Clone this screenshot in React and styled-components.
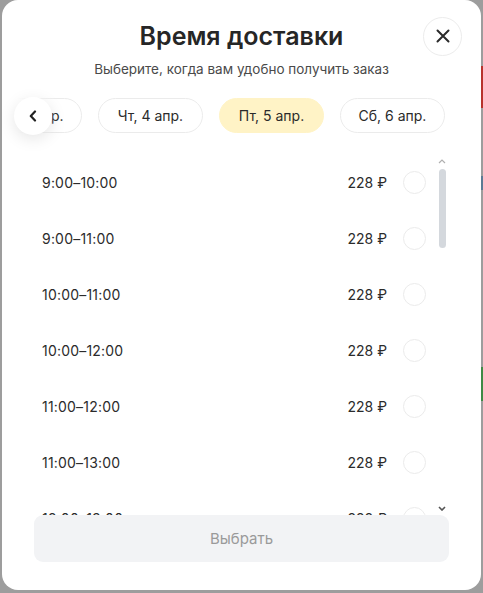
import React from "react";
import styled, { createGlobalStyle } from "styled-components";

const Global = createGlobalStyle`
  html, body { margin: 0; padding: 0; }
  body {
    background: #9d9d9d;
    font-family: Inter, "Noto Sans", Arial, sans-serif;
    color: #2b2b2b;
    overflow: hidden;
  }
  #root { width: 483px; height: 593px; }
`;

const Backdrop = styled.div`
  position: relative;
  width: 483px;
  height: 593px;
  display: flex;
  padding: 0 2px 3px 2px;
  box-sizing: border-box;
`;

const Strip = styled.div`
  position: absolute;
  right: 0;
  top: ${(p) => p.$top}px;
  width: 2px;
  height: ${(p) => p.$h}px;
  background: ${(p) => p.$c};
`;

const Modal = styled.div`
  width: 479px;
  height: 590px;
  background: #fff;
  border-radius: 16px;
  display: flex;
  flex-direction: column;
  padding-top: 16px;
  box-sizing: border-box;
  overflow: hidden;
`;

const Header = styled.div`
  display: grid;
  grid-template-columns: 1fr auto 1fr;
  align-items: center;
  height: 40px;
  padding: 0 19px;
`;

const Title = styled.h1`
  grid-column: 2;
  margin: 0;
  font-size: 25px;
  line-height: 40px;
  font-weight: 600;
  color: #262626;
`;

const CloseButton = styled.button`
  grid-column: 3;
  justify-self: end;
  width: 39px;
  height: 39px;
  border-radius: 50%;
  border: 1px solid #ececec;
  background: #fff;
  display: flex;
  align-items: center;
  justify-content: center;
  padding: 0;
`;

const Subtitle = styled.p`
  margin: 3px 0 0;
  text-align: center;
  font-size: 13.5px;
  line-height: 20px;
  color: #4a4a4a;
`;

const ChipsSection = styled.div`
  position: relative;
  margin-top: 19px;
  height: 36px;
`;

const ChipViewport = styled.div`
  overflow: hidden;
  height: 36px;
`;

const ChipTrack = styled.div`
  display: flex;
  gap: 16px;
  transform: translateX(${(p) => p.$offset}px);
`;

const Chip = styled.button`
  flex: 0 0 auto;
  width: 105px;
  height: 35px;
  border-radius: 18px;
  border: 1px solid ${(p) => (p.$active ? "#fff3c6" : "#ebebeb")};
  background: ${(p) => (p.$active ? "#fff3c6" : "#fff")};
  font-family: inherit;
  font-size: 14px;
  color: #2b2b2b;
  padding: 0;
`;

const Fade = styled.div`
  position: absolute;
  left: 0;
  top: -30px;
  width: 56px;
  height: 100px;
  background: linear-gradient(to right, #fff 0%, #fff 28%, rgba(255,255,255,0.6) 60%, rgba(255,255,255,0) 100%);
  pointer-events: none;
`;

const ArrowButton = styled.button`
  position: absolute;
  left: 12px;
  top: -1px;
  width: 38px;
  height: 38px;
  border-radius: 50%;
  border: none;
  background: #fff;
  box-shadow: 0 4px 16px rgba(0, 0, 0, 0.1);
  display: flex;
  align-items: center;
  justify-content: center;
  padding: 0;
`;

const Body = styled.div`
  margin-top: 20px;
  height: 361px;
  display: flex;
  padding-right: 32px;
`;

const ListViewport = styled.div`
  flex: 1;
  overflow: hidden;
  padding-left: 40px;
  padding-right: 9px;
`;

const Row = styled.div`
  height: 56px;
  display: flex;
  align-items: center;
  font-size: 14px;
  color: #2b2b2b;
`;

const Time = styled.span`
  flex: 1;
  letter-spacing: 0.2px;
`;

const Price = styled.span`
  margin-right: 16px;
`;

const Radio = styled.span`
  width: 23px;
  height: 23px;
  border-radius: 50%;
  border: 1px solid #ebebeb;
  box-sizing: border-box;
`;

const Scrollbar = styled.div`
  width: 14px;
  display: flex;
  flex-direction: column;
  align-items: center;
`;

const ScrollArrow = styled.div`
  height: 14px;
  display: flex;
  align-items: center;
  justify-content: center;
`;

const Track = styled.div`
  flex: 1;
  width: 7px;
  padding-top: 1px;
`;

const Thumb = styled.div`
  width: 7px;
  height: 79px;
  border-radius: 4px;
  background: #d4d8dd;
`;

const Footer = styled.div`
  padding: 0 32px;
`;

const SubmitButton = styled.button`
  width: 100%;
  height: 47px;
  border: none;
  border-radius: 9px;
  background: #f2f3f5;
  color: #9a9a9a;
  font-family: inherit;
  font-size: 15px;
`;

const dates = ["Ср, 3 апр.", "Чт, 4 апр.", "Пт, 5 апр.", "Сб, 6 апр."];
const slots = [
  "9:00–10:00",
  "9:00–11:00",
  "10:00–11:00",
  "10:00–12:00",
  "11:00–12:00",
  "11:00–13:00",
  "12:00–13:00",
];

export default function App() {
  return (
    <>
      <Global />
      <Backdrop>
        <Strip $top={66} $h={42} $c="#b8322c" />
        <Strip $top={176} $h={14} $c="#5b7a94" />
        <Strip $top={367} $h={34} $c="#3f8a45" />
        <Modal>
          <Header>
            <Title>Время доставки</Title>
            <CloseButton aria-label="Закрыть">
              <svg width="14" height="14" viewBox="0 0 14 14">
                <path d="M1.5 1.5 L12.5 12.5 M12.5 1.5 L1.5 12.5" stroke="#2b2b2b" strokeWidth="2" strokeLinecap="round" />
              </svg>
            </CloseButton>
          </Header>
          <Subtitle>Выберите, когда вам удобно получить заказ</Subtitle>
          <ChipsSection>
            <ChipViewport>
              <ChipTrack $offset={-25}>
                {dates.map((d) => (
                  <Chip key={d} $active={d.startsWith("Пт")}>{d}</Chip>
                ))}
              </ChipTrack>
            </ChipViewport>
            <Fade />
            <ArrowButton aria-label="Назад">
              <svg width="10" height="12" viewBox="0 0 10 12">
                <path d="M7 1.5 L2.8 6 L7 10.5" fill="none" stroke="#222" strokeWidth="2.2" strokeLinecap="round" strokeLinejoin="round" />
              </svg>
            </ArrowButton>
          </ChipsSection>
          <Body>
            <ListViewport>
              {slots.map((s) => (
                <Row key={s}>
                  <Time>{s}</Time>
                  <Price>228 ₽</Price>
                  <Radio />
                </Row>
              ))}
            </ListViewport>
            <Scrollbar>
              <ScrollArrow>
                <svg width="8" height="5" viewBox="0 0 8 5">
                  <path d="M1 4 L4 1 L7 4" fill="none" stroke="#b0b0b0" strokeWidth="1.2" />
                </svg>
              </ScrollArrow>
              <Track>
                <Thumb />
              </Track>
              <ScrollArrow>
                <svg width="8" height="5" viewBox="0 0 8 5">
                  <path d="M1 1 L4 4 L7 1" fill="none" stroke="#555" strokeWidth="1.6" />
                </svg>
              </ScrollArrow>
            </Scrollbar>
          </Body>
          <Footer>
            <SubmitButton>Выбрать</SubmitButton>
          </Footer>
        </Modal>
      </Backdrop>
    </>
  );
}
